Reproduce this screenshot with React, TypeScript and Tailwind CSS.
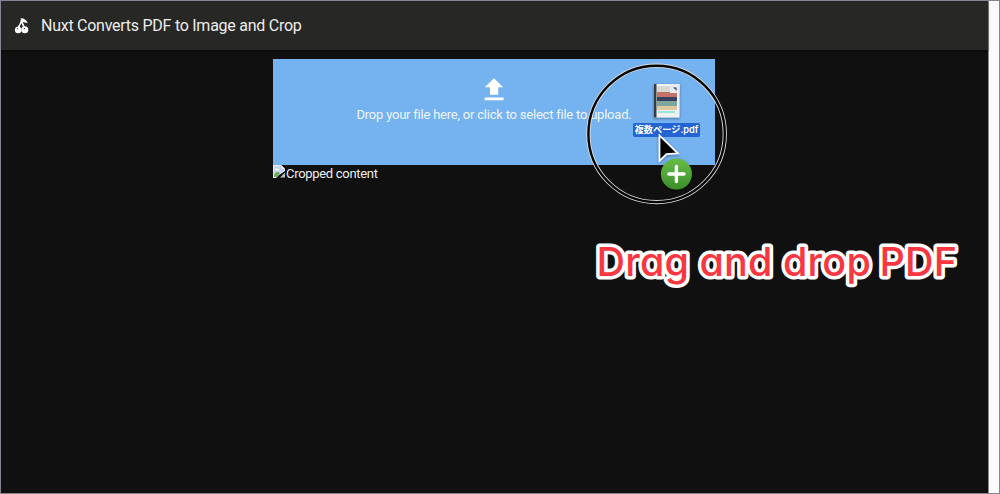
function FruitIcon() {
  return (
    <svg width="16" height="18" viewBox="0 0 16 18" className="shrink-0" fill="#fff">
      <path d="M6.8 1.2 C9.4 1 12.6 2.8 13.8 6.2 C11.6 5.4 10 5.4 8.6 5 L10.8 9.4 L9 9.8 L7.2 6 L5.6 10.4 L3.4 9.8 C5.6 7.4 7 4.4 6.8 1.2Z" />
      <circle cx="4.2" cy="13" r="3.3" />
      <circle cx="10.8" cy="12.8" r="3.5" />
      <path d="M3.2 11.6h1M9.8 11.6h1.2" stroke="#272725" strokeWidth="1" />
    </svg>
  );
}

function BrokenImage() {
  return (
    <svg width="13" height="13" viewBox="0 0 13 13" className="shrink-0">
      <path d="M0 0h8l4 4v2L6 10l-3 3H0z" fill="#e9eef5" />
      <path d="M1 1h7v3h3v2L7 8H1z" fill="#c6d4f0" />
      <path d="M1 12V9.5C3 6 5 6 7 8.5L3.5 12z" fill="#6cb05c" />
      <path d="M2.2 4.8c0-1.5 2-1.8 2.5-.8 1.4-.3 1.8 1.5.5 1.5h-2.5z" fill="#fff" />
      <path d="M12 7.5V12.5H7z" fill="#b9bfbd" />
      <path d="M8 0v4h4" fill="#fff" stroke="#aaa" strokeWidth=".5" />
    </svg>
  );
}

function DragPreview() {
  return (
    <svg width="142" height="142" viewBox="586 63 142 142" className="absolute left-[585px] top-[62px]">
      <defs>
        <linearGradient id="plus" x1="0" y1="0" x2="0" y2="1">
          <stop offset="0" stopColor="#67bd48" />
          <stop offset="1" stopColor="#3b8d29" />
        </linearGradient>
        <filter id="shade" x="-40%" y="-40%" width="180%" height="180%">
          <feDropShadow dx="0" dy="1" stdDeviation="1.8" floodOpacity=".4" />
        </filter>
      </defs>
      <circle cx="656.6" cy="133.9" r="68.2" fill="none" stroke="#d9dde0" strokeWidth="4.2" />
      <circle cx="656.6" cy="133.9" r="68.2" fill="none" stroke="#050505" strokeWidth="2.4" />
      <g filter="url(#shade)">
        <path d="M654 84h25.5v33.5H654z" fill="#edf1f0" />
        <path d="M654 84h2.5v33.5H654z" fill="#343b43" />
        <path d="M657 86h20v6h-20z" fill="#d9d8d1" />
        <path d="M657 92h20v5h-20z" fill="#c57368" />
        <path d="M657 97h20v4.5h-20z" fill="#37405f" />
        <path d="M657 101.5h20v4.5h-20z" fill="#7da79a" />
        <path d="M657 106h20v4h-20z" fill="#dfc7a2" />
        <path d="M658 112h17" stroke="#63d8cc" strokeWidth="1.2" />
        <path d="M670 84h9.5v9H670z" fill="#e7eaf1" />
        <path d="M673 87.2l3.6.2v3.4z" fill="#3e4f83" />
      </g>
    </svg>
  );
}

function PointerBadge() {
  return (
    <svg width="44" height="60" viewBox="654 132 44 60" className="absolute left-[653px] top-[131px]">
      <circle cx="676.4" cy="174" r="15.5" fill="url(#plus)" filter="url(#shade)" />
      <path d="M676.4 166.4v15.2M668.8 174h15.2" stroke="#fff" strokeWidth="3.4" strokeLinecap="round" />
      <path d="M659.5 135.5v25.3l7-6.7 11.3-.8z" fill="#050505" stroke="#fff" strokeWidth="1.7" filter="url(#shade)" />
    </svg>
  );
}

function Caption() {
  return (
    <svg
      width="370"
      height="56"
      viewBox="592 236 370 56"
      className="absolute left-[591px] top-[235px] font-['Inter',sans-serif] text-[39.5px] font-medium tracking-[0.2px] [font-feature-settings:'cv11'] [paint-order:stroke_fill]"
      fill="#fa3640"
      stroke="#fff"
      strokeWidth="7"
      strokeLinejoin="round"
    >
      <text y="276.2">
        <tspan x="596.5">Drag </tspan>
        <tspan x="699.5">and </tspan>
        <tspan x="783">drop </tspan>
        <tspan x="879.5">PDF</tspan>
      </text>
    </svg>
  );
}

export default function App() {
  return (
    <div className="relative flex h-[494px] w-[1000px] overflow-hidden border border-[#858592] bg-[#fafafa] font-['Roboto',sans-serif] text-white">
      <div className="flex w-[988px] flex-col border-r border-[#8b8b8f] bg-[#101010]">
        <header className="flex h-[49px] shrink-0 items-center gap-[11px] bg-[#272725] pl-[13px] shadow-[0_1px_2px_#0008]">
          <FruitIcon />
          <h1 className="text-[16px] leading-6 tracking-[-0.26px] text-[#ededeb]">Nuxt Converts PDF to Image and Crop</h1>
        </header>
        <main className="ml-[272px] mt-[9px] w-[442px]">
          <button className="flex h-[106px] w-full flex-col items-center bg-[#75b2f0] pt-[19px]">
            <svg width="20" height="24" viewBox="0 0 20 24" fill="#fff">
              <path d="M10 .3l9.2 9h-5v7.4H6V9.3H.8zM.6 19.6h19v2.6H.6z" />
            </svg>
            <span className="mt-[3px] whitespace-nowrap text-[13px] leading-5 tracking-[-0.22px] text-[#eef5fb]">
              Drop your file here, or click to select file to upload.
            </span>
          </button>
          <div className="flex items-start text-[13px] leading-[18px] tracking-[-0.3px] text-[#eee]">
            <BrokenImage />
            <span>Cropped content</span>
          </div>
        </main>
      </div>
      <DragPreview />
      <div className="absolute left-[632px] top-[122px] flex h-[14px] w-[67px] items-center justify-center whitespace-nowrap rounded-[2px] bg-[#2364d2] font-['Inter','Noto_Sans_CJK_JP',sans-serif] text-[9.2px] font-semibold leading-[14px]">
        複数ページ.pdf
      </div>
      <PointerBadge />
      <Caption />
    </div>
  );
}
